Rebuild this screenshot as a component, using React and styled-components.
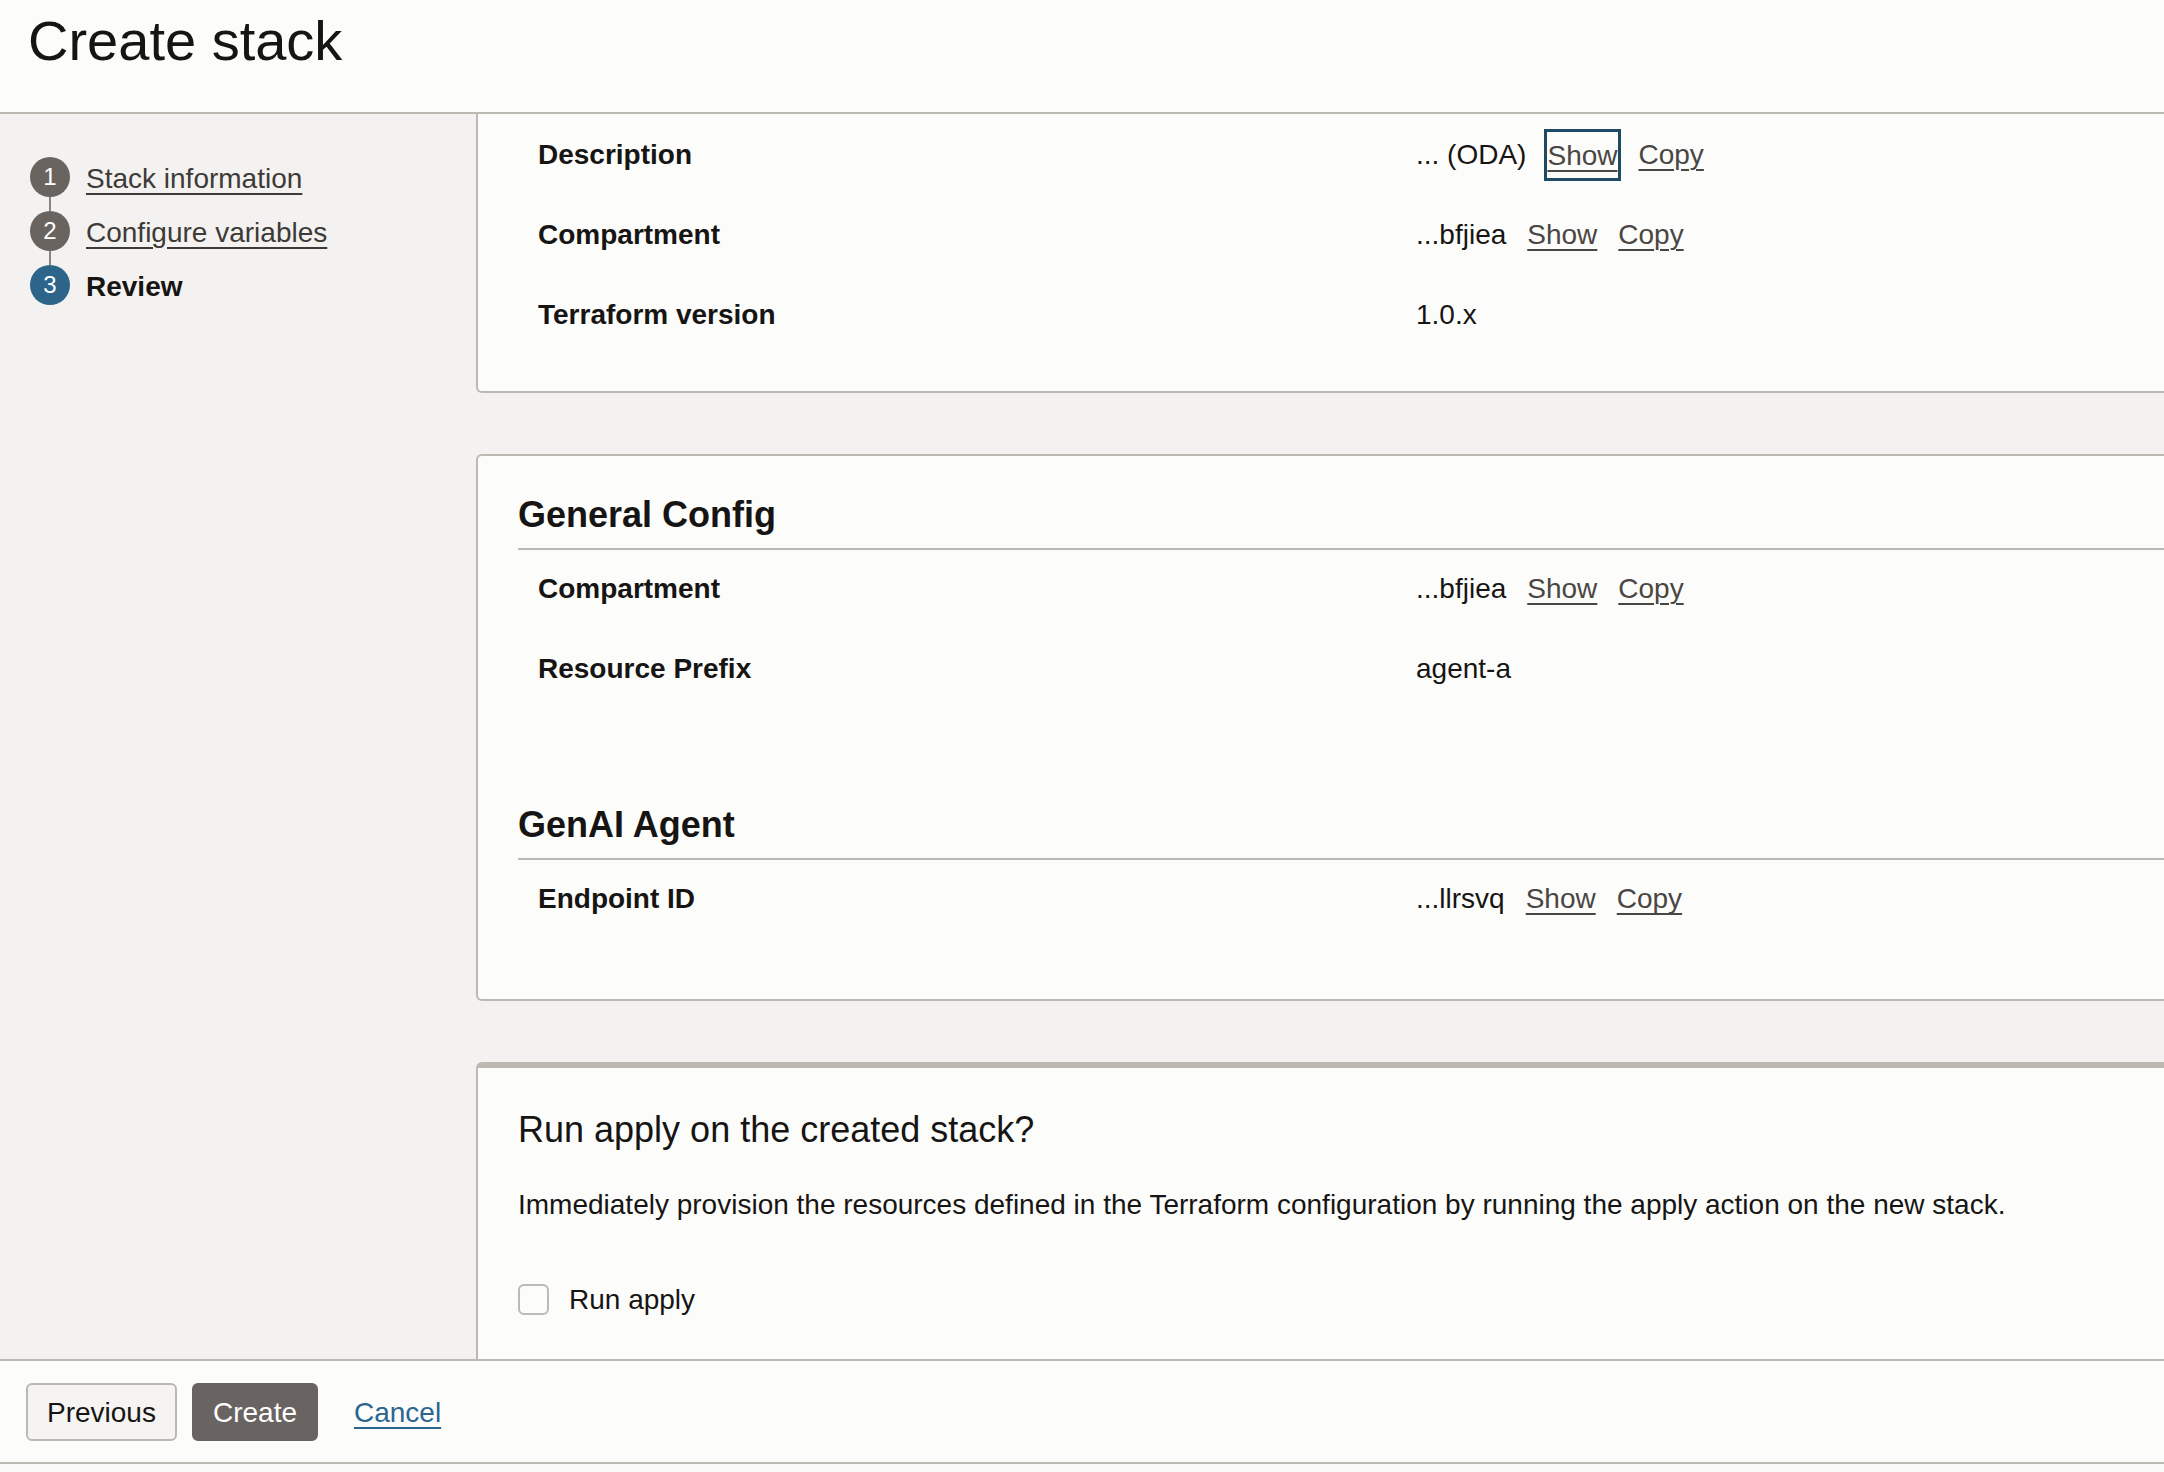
import React from "react";
import styled, { createGlobalStyle } from "styled-components";

const GlobalStyle = createGlobalStyle`
  html, body {
    margin: 0;
    padding: 0;
    background: #f9f9f8;
  }
  body {
    font-family: "Liberation Sans", Arial, sans-serif;
    color: #161513;
    font-size: 28px;
  }
  * {
    box-sizing: border-box;
  }
`;

const steps = [
  { id: 1, name: "Stack information", done: true },
  { id: 2, name: "Configure variables", done: true },
  { id: 3, name: "Review", done: false },
];

function App() {
  return (
    <>
      <GlobalStyle />
      <Page>
        <Header>
          <h1>Create stack</h1>
        </Header>
        <Body>
          <Sidebar>
            {steps.map((step, i) => (
              <React.Fragment key={step.id}>
                {i > 0 && <Connector />}
                <Step>
                  <Circle $current={!step.done}>{step.id}</Circle>
                  {step.done ? (
                    <StepLink href="#">{step.name}</StepLink>
                  ) : (
                    <StepCurrent>{step.name}</StepCurrent>
                  )}
                </Step>
              </React.Fragment>
            ))}
          </Sidebar>
          <Main>
            <Card $variant="clipped">
              <Row>
                <Label>Description</Label>
                <Value>
                  ... (ODA)
                  <TextLink href="#" $focused>
                    Show
                  </TextLink>
                  <TextLink href="#">Copy</TextLink>
                </Value>
              </Row>
              <Row>
                <Label>Compartment</Label>
                <Value>
                  ...bfjiea
                  <TextLink href="#">Show</TextLink>
                  <TextLink href="#">Copy</TextLink>
                </Value>
              </Row>
              <Row>
                <Label>Terraform version</Label>
                <Value>1.0.x</Value>
              </Row>
            </Card>

            <Card>
              <Section>
                <SectionTitle>General Config</SectionTitle>
                <Row>
                  <Label>Compartment</Label>
                  <Value>
                    ...bfjiea
                    <TextLink href="#">Show</TextLink>
                    <TextLink href="#">Copy</TextLink>
                  </Value>
                </Row>
                <Row>
                  <Label>Resource Prefix</Label>
                  <Value>agent-a</Value>
                </Row>
              </Section>
              <Section>
                <SectionTitle>GenAI Agent</SectionTitle>
                <Row>
                  <Label>Endpoint ID</Label>
                  <Value>
                    ...llrsvq
                    <TextLink href="#">Show</TextLink>
                    <TextLink href="#">Copy</TextLink>
                  </Value>
                </Row>
              </Section>
            </Card>

            <Card $variant="accent">
              <ApplyTitle>Run apply on the created stack?</ApplyTitle>
              <ApplyText>
                Immediately provision the resources defined in the Terraform
                configuration by running the apply action on the new stack.
              </ApplyText>
              <CheckRow>
                <CheckBox type="checkbox" />
                <span>Run apply</span>
              </CheckRow>
            </Card>
          </Main>
        </Body>
        <Footer>
          <Button>Previous</Button>
          <Button $primary>Create</Button>
          <CancelLink href="#">Cancel</CancelLink>
        </Footer>
      </Page>
    </>
  );
}

const Page = styled.div`
  height: 100vh;
  display: flex;
  flex-direction: column;
  overflow: hidden;
`;

const Header = styled.header`
  height: 114px;
  flex-shrink: 0;
  background: #fcfcfb;
  border-bottom: 2px solid #bcb8b2;
  padding: 7px 28px 0;
  h1 {
    margin: 0;
    font-size: 56px;
    font-weight: 400;
    line-height: 1.2;
  }
`;

const Body = styled.div`
  flex: 1;
  display: flex;
  min-height: 0;
  background: #f3f2f1;
  overflow: hidden;
`;

const Sidebar = styled.nav`
  width: 476px;
  flex-shrink: 0;
  padding: 43px 0 0 30px;
  display: flex;
  flex-direction: column;
`;

const Step = styled.div`
  display: flex;
  align-items: center;
  gap: 16px;
  height: 40px;
`;

const Connector = styled.div`
  width: 2px;
  height: 14px;
  margin-left: 19px;
  background: #8a8480;
`;

const Circle = styled.span`
  width: 40px;
  height: 40px;
  border-radius: 50%;
  background: ${(p) => (p.$current ? "#2c6589" : "#6a6460")};
  color: #fff;
  font-size: 24px;
  display: flex;
  align-items: center;
  justify-content: center;
  flex-shrink: 0;
`;

const StepLink = styled.a`
  color: #3d3a37;
  font-size: 28px;
  line-height: 34px;
  padding-top: 3px;
  text-decoration: underline;
  text-underline-offset: 5px;
  text-decoration-thickness: 2px;
`;

const StepCurrent = styled.span`
  font-size: 28px;
  line-height: 34px;
  padding-top: 3px;
  font-weight: 700;
  color: #161513;
`;

const Main = styled.main`
  flex: 1;
  min-width: 0;
  overflow: hidden;
  display: flex;
  flex-direction: column;
  gap: 61px;
`;

const cardPadding = {
  clipped: "2px 0 35px 40px",
  accent: "40px 0 60px 40px",
  plain: "37px 0 59px 40px",
};

const Card = styled.section`
  flex-shrink: 0;
  background: #fcfcfb;
  border: 2px solid #bcb8b2;
  border-right: none;
  border-top-width: ${(p) =>
    p.$variant === "clipped" ? "0" : p.$variant === "accent" ? "6px" : "2px"};
  border-radius: ${(p) => (p.$variant === "clipped" ? "0 0 0 6px" : "6px 0 0 6px")};
  padding: ${(p) => cardPadding[p.$variant || "plain"]};
`;

const Section = styled.div`
  & + & {
    margin-top: 93px;
  }
`;

const SectionTitle = styled.h2`
  margin: 0;
  font-size: 36px;
  font-weight: 700;
  line-height: 1.2;
  padding-bottom: 12px;
  border-bottom: 2px solid #bcb8b2;
`;

const Row = styled.div`
  display: grid;
  grid-template-columns: 878px 1fr;
  padding: 22px 0 24px 20px;
  height: 80px;
  line-height: 34px;
`;

const Label = styled.div`
  font-weight: 700;
`;

const Value = styled.div`
  display: flex;
  align-items: center;
  gap: 21px;
  height: 34px;
`;

const TextLink = styled.a`
  display: inline-block;
  color: #4a4643;
  text-decoration: underline;
  text-underline-offset: 5px;
  text-decoration-thickness: 2px;
  line-height: 34px;
  padding: ${(p) => (p.$focused ? "7px 0 5px" : "0")};
  outline: ${(p) => (p.$focused ? "3px solid #1f4a63" : "none")};
  outline-offset: 0;
`;

const ApplyTitle = styled.h3`
  margin: 0;
  font-size: 36px;
  font-weight: 400;
  line-height: 1.2;
`;

const ApplyText = styled.p`
  margin: 36px 0 0;
  line-height: 34px;
`;

const CheckRow = styled.label`
  display: flex;
  align-items: center;
  gap: 20px;
  margin-top: 62px;
`;

const CheckBox = styled.input`
  appearance: none;
  margin: 0;
  width: 31px;
  height: 31px;
  border: 2px solid #bdb9b4;
  border-radius: 6px;
  background: #fcfcfb;
`;

const Footer = styled.footer`
  height: 105px;
  flex-shrink: 0;
  margin-bottom: 8px;
  background: #fcfcfb;
  border-top: 2px solid #bcb8b2;
  border-bottom: 2px solid #bcb8b2;
  padding-left: 26px;
  display: flex;
  align-items: center;
`;

const Button = styled.button`
  height: 58px;
  padding: 2px 19px 0;
  margin-right: 15px;
  border-radius: 6px;
  font-family: "Liberation Sans", Arial, sans-serif;
  font-size: 28px;
  border: 2px solid ${(p) => (p.$primary ? "#696461" : "#bcb8b2")};
  background: ${(p) => (p.$primary ? "#696461" : "#f5f4f2")};
  color: ${(p) => (p.$primary ? "#fff" : "#161513")};
`;

const CancelLink = styled.a`
  margin-left: 21px;
  padding-top: 2px;
  color: #2a6690;
  text-decoration: underline;
  text-underline-offset: 5px;
  text-decoration-thickness: 2px;
`;

export default App;
